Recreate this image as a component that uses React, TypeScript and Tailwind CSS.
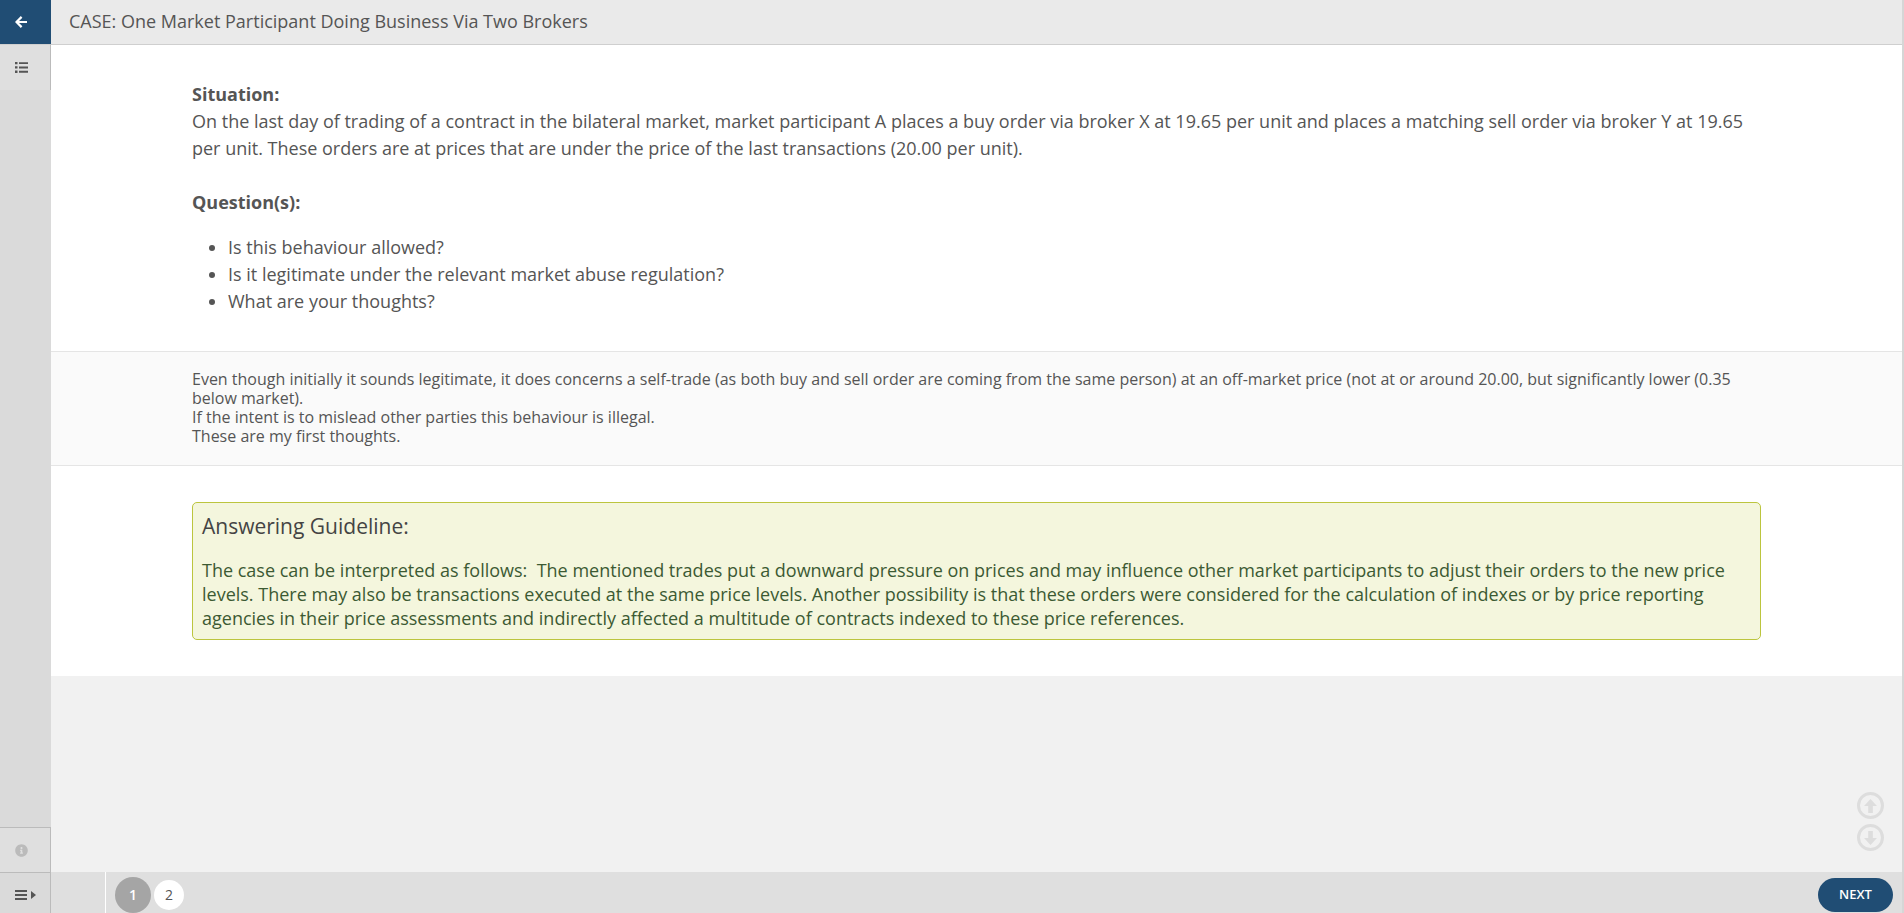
import { FaInfoCircle } from "react-icons/fa";

const questions = [
  "Is this behaviour allowed?",
  "Is it legitimate under the relevant market abuse regulation?",
  "What are your thoughts?",
];

function BackIcon() {
  return (
    <svg width="12" height="12" viewBox="0 0 12 12" fill="none" stroke="currentColor" strokeWidth="2.2" aria-hidden="true">
      <path d="M6.6 0.9 1.5 6l5.1 5.1M1.8 6H12" />
    </svg>
  );
}

function ListIcon() {
  return (
    <svg width="13" height="11" viewBox="0 0 13 11" fill="currentColor" aria-hidden="true">
      <path d="M0 0h2.5v2.3H0zM0 4.3h2.5v2.3H0zM0 8.6h2.5v2.3H0zM4 .2h9v1.9H4zM4 4.5h9v1.9H4zM4 8.8h9v1.9H4z" />
    </svg>
  );
}

function MenuIcon() {
  return (
    <svg width="21" height="12" viewBox="0 0 21 12" fill="currentColor" aria-hidden="true">
      <path d="M0 1h12v2H0zM0 5h12v2H0zM0 9h12v2H0zM16 2l5 4-5 4z" />
    </svg>
  );
}

function ScrollArrow({ down = false }: { down?: boolean }) {
  return (
    <svg width="13" height="14" viewBox="0 0 13 14" fill="currentColor" aria-hidden="true">
      {down ? <path d="M4.2 0h4.6v7H13l-6.5 7L0 7h4.2z" /> : <path d="M4.2 14h4.6V7H13L6.5 0 0 7h4.2z" />}
    </svg>
  );
}

function Sidebar() {
  return (
    <nav aria-label="Course" className="flex w-[51px] shrink-0 flex-col bg-[#dadada] text-[#555555]">
      <a href="#back" aria-label="Back" className="flex h-11 items-center bg-[#204d74] pl-[15px] text-white">
        <BackIcon />
      </a>
      <button type="button" aria-label="Contents" className="flex h-[46px] items-center border-t border-r border-t-[#cfcfcf] border-r-[#bbbbbb] bg-[#dfdfdf] pl-[15px]">
        <ListIcon />
      </button>
      <div className="flex-1" />
      <button type="button" aria-label="Information" className="flex h-[45px] items-center border-t border-r border-[#bbbbbb] bg-[#dfdfdf] pl-[15px] text-[#bbbbbb]">
        <FaInfoCircle size={13} />
      </button>
      <button type="button" aria-label="Expand menu" className="flex h-[41px] items-center border-t border-r border-[#bbbbbb] bg-[#dadada] pt-1 pl-[15px]">
        <MenuIcon />
      </button>
    </nav>
  );
}

function Footer() {
  return (
    <footer className="flex h-[41px] shrink-0 items-center bg-[#dfdfdf] pr-[9px]">
      <div className="h-full w-[55px] border-r border-white" />
      <div className="flex flex-1 items-center gap-[3px] pt-1 pl-[9px] text-[14px]">
        <button type="button" aria-current="page" className="size-9 rounded-full bg-[#a5a5a5] font-semibold text-white">1</button>
        <button type="button" className="size-[30px] rounded-full bg-white">2</button>
      </div>
      <button type="button" className="mt-1 h-[34px] w-[75px] rounded-full bg-[#204d74] text-[13px] font-semibold text-white">NEXT</button>
    </footer>
  );
}

export default function App() {
  return (
    <div className="flex h-screen border-r-2 border-[#d6d6d6] bg-[#f1f1f1] font-['Open_Sans',sans-serif] text-[#555555]">
      <Sidebar />
      <div className="flex min-w-0 flex-1 flex-col">
        <header className="flex h-[45px] shrink-0 items-center border-b border-[#cfcfcf] bg-[#eaeaea] px-[18px] pb-[2px]">
          <h1 className="text-[18px] leading-[27px]">CASE: One Market Participant Doing Business Via Two Brokers</h1>
        </header>
        <main className="relative min-h-0 flex-1">
          <div className="h-full overflow-auto">
            <section className="bg-white px-[141px] py-9 text-[18px] leading-[27px]">
              <h2 className="font-bold">Situation:</h2>
              <p>
                On the last day of trading of a contract in the bilateral market, market participant A places a buy order via broker X at 19.65 per unit and places a matching sell order via broker Y at 19.65 per unit. These orders are at prices that are under the price of the last transactions (20.00 per unit).
              </p>
              <h2 className="mt-[27px] font-bold">Question(s):</h2>
              <ul className="mt-[18px] list-disc pl-9">
                {questions.map((q) => (
                  <li key={q}>{q}</li>
                ))}
              </ul>
            </section>
            <section className="border-y border-[#e5e5e5] bg-[#fafafa] px-[141px] pt-[18px] pb-[19px] text-[16px] leading-[19px]">
              <p>
                Even though initially it sounds legitimate, it does concerns a self-trade (as both buy and sell order are coming from the same person) at an off-market price (not at or around 20.00, but significantly lower (0.35 below market).
              </p>
              <p>If the intent is to mislead other parties this behaviour is illegal.</p>
              <p>These are my first thoughts.</p>
            </section>
            <section className="bg-white px-[141px] py-9">
              <div className="rounded-[5px] border border-[#bcc53e] bg-[#f4f6dd] px-[9px] py-[9px]">
                <h2 className="text-[21px] leading-7 text-[#444444]">Answering Guideline:</h2>
                <p className="mt-[18px] text-[18px] leading-6 text-[#3c5a33]">
                  The case can be interpreted as follows:&nbsp; The mentioned trades put a downward pressure on prices and may influence other market participants to adjust their orders to the new price levels. There may also be transactions executed at the same price levels. Another possibility is that these orders were considered for the calculation of indexes or by price reporting agencies in their price assessments and indirectly affected a multitude of contracts indexed to these price references.
                </p>
              </div>
            </section>
          </div>
          <div className="absolute right-[18px] bottom-[21px] flex flex-col gap-[5px] text-[#dddddd]">
            <button type="button" aria-label="Scroll up" className="flex size-[27px] items-center justify-center rounded-full border-3 border-[#dddddd]">
              <ScrollArrow />
            </button>
            <button type="button" aria-label="Scroll down" className="flex size-[27px] items-center justify-center rounded-full border-3 border-[#dddddd]">
              <ScrollArrow down />
            </button>
          </div>
        </main>
        <Footer />
      </div>
    </div>
  );
}
